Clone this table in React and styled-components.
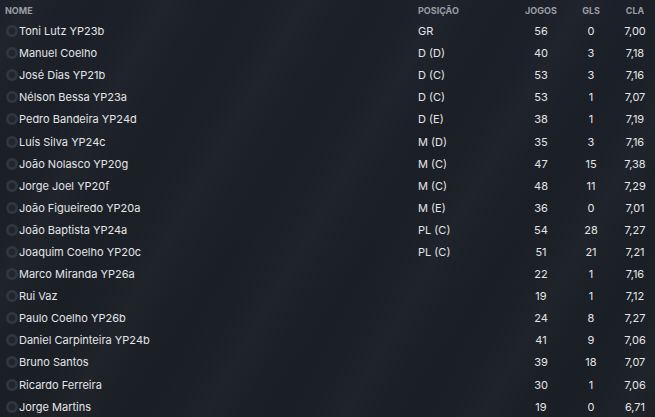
import React from "react";
import styled, { createGlobalStyle } from "styled-components";

const Global = createGlobalStyle`
  html, body { margin: 0; padding: 0; background: #1b1f26; }
  body { font-family: Inter, Roboto, "Liberation Sans", sans-serif; }
`;

const players = [
  ["Toni Lutz YP23b", "GR", 56, 0, "7,00"],
  ["Manuel Coelho", "D (D)", 40, 3, "7,18"],
  ["José Dias YP21b", "D (C)", 53, 3, "7,16"],
  ["Nélson Bessa YP23a", "D (C)", 53, 1, "7,07"],
  ["Pedro Bandeira YP24d", "D (E)", 38, 1, "7,19"],
  ["Luís Silva YP24c", "M (D)", 35, 3, "7,16"],
  ["João Nolasco YP20g", "M (C)", 47, 15, "7,38"],
  ["Jorge Joel YP20f", "M (C)", 48, 11, "7,29"],
  ["João Figueiredo YP20a", "M (E)", 36, 0, "7,01"],
  ["João Baptista YP24a", "PL (C)", 54, 28, "7,27"],
  ["Joaquim Coelho YP20c", "PL (C)", 51, 21, "7,21"],
  ["Marco Miranda YP26a", "", 22, 1, "7,16"],
  ["Rui Vaz", "", 19, 1, "7,12"],
  ["Paulo Coelho YP26b", "", 24, 8, "7,27"],
  ["Daniel Carpinteira YP24b", "", 41, 9, "7,06"],
  ["Bruno Santos", "", 39, 18, "7,07"],
  ["Ricardo Ferreira", "", 30, 1, "7,06"],
  ["Jorge Martins", "", 19, 0, "6,71"],
];

const Page = styled.div`
  width: 655px;
  height: 417px;
  overflow: hidden;
  background:
    repeating-linear-gradient(
      -60deg,
      rgba(255,255,255,0) 0px,
      rgba(255,255,255,0.018) 30px,
      rgba(255,255,255,0) 60px,
      rgba(0,0,0,0.03) 90px,
      rgba(255,255,255,0) 120px
    ),
    linear-gradient(180deg, #1c2028 0%, #1b1f26 100%);
`;

const Grid = styled.div`
  display: grid;
  grid-template-columns: 1fr 102px 52px 48px 40px;
`;

const HeaderRow = styled(Grid)`
  height: 20px;
  align-items: center;
  font-size: 9px;
  font-weight: 700;
  color: #9a9ea6;
`;

const Row = styled(Grid)`
  height: 22.1px;
  align-items: center;
  font-size: 11px;
  color: #e4e5e7;
`;

const Cell = styled.div`
  text-align: ${(p) => (p.$center ? "center" : "left")};
  padding-left: ${(p) => (p.$pad ? p.$pad : 0)}px;
  white-space: nowrap;
`;

const NameCell = styled.div`
  display: flex;
  align-items: center;
  gap: 1px;
  padding-left: 6px;
  white-space: nowrap;
`;

const Dot = styled.span`
  width: 12px;
  height: 12px;
  border-radius: 50%;
  background: radial-gradient(circle, #22262c 0 3px, #32363d 3.8px);
  flex: none;
`;

export default function App() {
  return (
    <>
      <Global />
      <Page>
        <HeaderRow>
          <Cell $pad={5}>NOME</Cell>
          <Cell $pad={5}>POSIÇÃO</Cell>
          <Cell $center>JOGOS</Cell>
          <Cell $center>GLS</Cell>
          <Cell $center>CLA</Cell>
        </HeaderRow>
        {players.map(([n, p, j, g, c]) => (
          <Row key={n}>
            <NameCell>
              <Dot />
              {n}
            </NameCell>
            <Cell $pad={5}>{p}</Cell>
            <Cell $center>{j}</Cell>
            <Cell $center>{g}</Cell>
            <Cell $center>{c}</Cell>
          </Row>
        ))}
      </Page>
    </>
  );
}
